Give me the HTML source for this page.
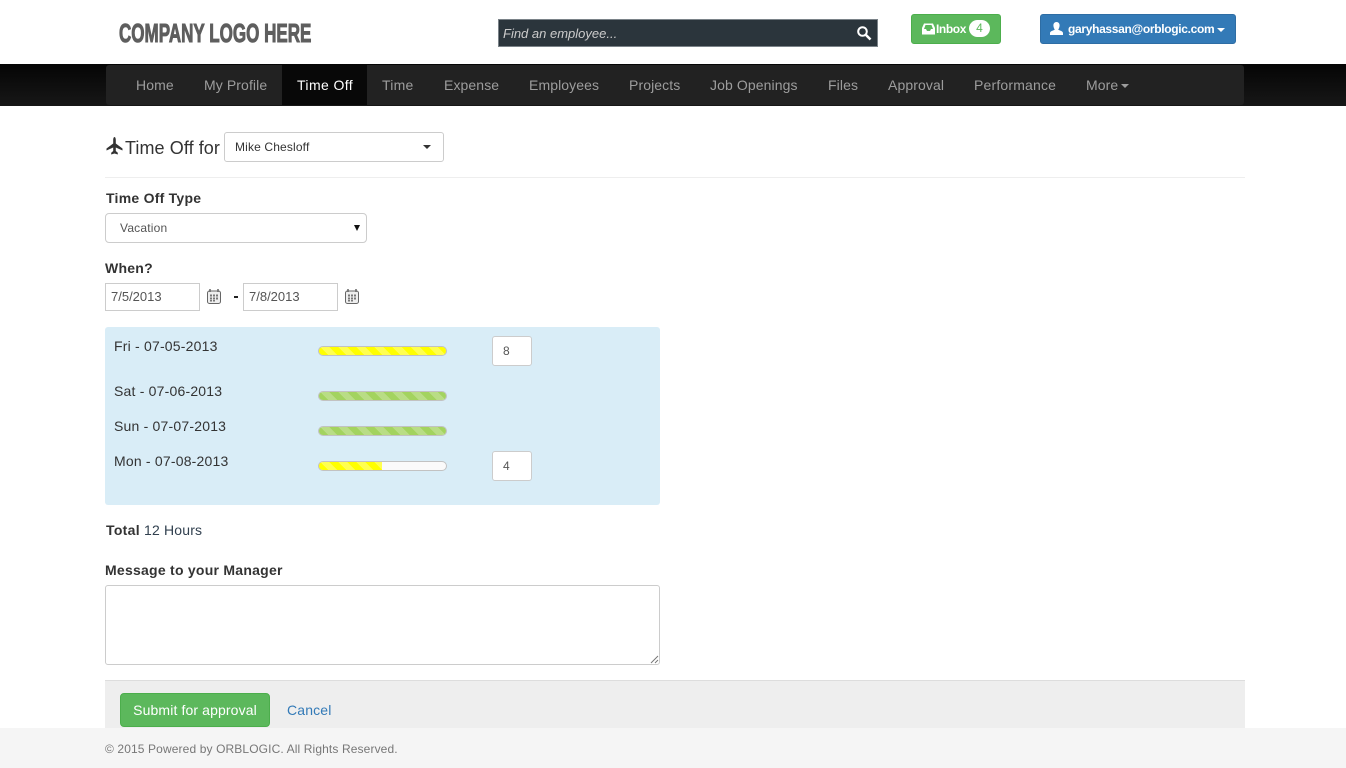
<!DOCTYPE html>
<html><head><meta charset="utf-8"><title>Time Off</title>
<style>
html,body{margin:0;padding:0;background:#fff}
body{width:1346px;height:768px;overflow:hidden;position:relative;font-family:"Liberation Sans",Arial,sans-serif;font-size:14px;color:#333}
.a{position:absolute;white-space:nowrap}
.nav{top:65px;height:41px;line-height:41px;color:#9d9d9d;font-size:14px;letter-spacing:.1px}
.b{font-weight:bold;letter-spacing:.25px}
.inp{background:#fff;border:1px solid #ccc;box-sizing:border-box}
.bar{position:absolute;left:318px;width:129px;height:10px;box-sizing:border-box;border:1px solid #c2c2c2;border-radius:5px;background:#fafafa;overflow:hidden}
.bar i{display:block;height:100%}
.y{background:repeating-linear-gradient(45deg,#ffff00 0 6.4px,#ffff50 6.4px 12.8px)}
.g{background:repeating-linear-gradient(45deg,#a3d35f 0 6.4px,#b9dd85 6.4px 12.8px)}
.day{left:114px;color:#333;font-size:14px;line-height:20px;letter-spacing:.2px}
</style></head><body>

<div class="a" style="left:119px;top:18px;font-size:26px;line-height:30px;font-weight:bold;color:#5e5e5e;-webkit-text-stroke:1px #5e5e5e;transform-origin:0 50%;transform:scaleX(.655)">COMPANY LOGO HERE</div>

<div class="a" style="left:498px;top:19px;width:380px;height:28px;box-sizing:border-box;background:#2b353c;border:1px solid #7a8288;color:#ccc;font-style:italic;font-size:13px;line-height:27px;padding-left:4px">Find an employee...</div>
<svg class="a" style="left:856px;top:25px" width="16" height="16" viewBox="0 0 16 16"><circle cx="6.5" cy="6.5" r="4.3" fill="none" stroke="#fff" stroke-width="2"/><path d="M10 10l4.5 4.5" stroke="#fff" stroke-width="2.6" fill="none"/></svg>

<div class="a" style="left:911px;top:14px;width:90px;height:30px;background:#5cb85c;border:1px solid #4cae4c;box-sizing:border-box;border-radius:3px"></div>
<svg class="a" style="left:922px;top:23px" width="13" height="12" viewBox="0 0 13 12"><path d="M2 .5h9L13 5v6.500H0V5z" fill="#fff"/><path d="M3.500 2h6L11 6H9L8 8H5L4 6H2z" fill="#5cb85c"/></svg>
<div class="a" style="left:936px;top:14px;line-height:30px;color:#fff;font-size:12px;font-weight:bold;letter-spacing:-.4px">Inbox</div>
<div class="a" style="left:969px;top:20px;width:21px;height:17px;border-radius:9px;background:#fff;color:#5cb85c;font-size:12px;line-height:17px;text-align:center">4</div>

<div class="a" style="left:1040px;top:14px;width:196px;height:30px;background:#337ab7;border:1px solid #2e6da4;box-sizing:border-box;border-radius:3px"></div>
<svg class="a" style="left:1050px;top:22px" width="13" height="13" viewBox="0 0 13 13"><path d="M6.500 0C8.500 0 9.600 1.500 9.600 3.500S8.500 7 8.200 7.800C9.500 8.600 12.800 9 13 11v2H0v-2c.2-2 3.500-2.400 4.800-3.200C4.500 7 3.400 5.500 3.400 3.500S4.500 0 6.500 0z" fill="#fff"/></svg>
<div class="a" style="left:1068px;top:14px;line-height:30px;color:#fff;font-size:12px;font-weight:bold;letter-spacing:-.32px">garyhassan@orblogic.com</div>
<div class="a" style="left:1217px;top:28px;border-top:4px solid #fff;border-left:4px solid transparent;border-right:4px solid transparent"></div>

<div class="a" style="left:0;top:64px;width:1346px;height:42px;background:linear-gradient(#050505,#171717)"></div>
<div class="a" style="left:106px;top:65px;width:1138px;height:40px;background:#222;border-radius:3px"></div>
<div class="a" style="left:282px;top:65px;width:85px;height:40px;background:#080808"></div>
<div class="a nav" style="left:136px">Home</div>
<div class="a nav" style="left:204px">My Profile</div>
<div class="a nav" style="left:297px;color:#fff;letter-spacing:.4px">Time Off</div>
<div class="a nav" style="left:382px;letter-spacing:.25px">Time</div>
<div class="a nav" style="left:444px">Expense</div>
<div class="a nav" style="left:529px">Employees</div>
<div class="a nav" style="left:629px">Projects</div>
<div class="a nav" style="left:710px">Job Openings</div>
<div class="a nav" style="left:828px">Files</div>
<div class="a nav" style="left:888px">Approval</div>
<div class="a nav" style="left:974px;letter-spacing:.18px">Performance</div>
<div class="a nav" style="left:1086px">More</div>
<div class="a" style="left:1121px;top:84px;border-top:4px solid #9d9d9d;border-left:4px solid transparent;border-right:4px solid transparent"></div>

<svg class="a" style="left:106px;top:137px" width="17" height="18" viewBox="0 0 17 18"><path d="M8.500 0C9.300 0 9.800 1.500 9.800 3v3.500L16.500 11.500v2L9.800 10.500V14l2 1.800v1.700L8.500 16.500 5.200 17.500v-1.700L7.200 14v-3.500L.5 13.500v-2L7.200 6.500V3C7.200 1.500 7.700 0 8.500 0z" fill="#333"/></svg>
<div class="a" style="left:125px;top:136px;font-size:18px;line-height:24px;color:#333;letter-spacing:.08px">Time Off for</div>
<div class="a inp" style="left:224px;top:132px;width:220px;height:30px;border-radius:3px;font-size:12px;line-height:28px;padding-left:10px;letter-spacing:.15px">Mike Chesloff</div>
<div class="a" style="left:423px;top:145px;border-top:4px solid #333;border-left:4px solid transparent;border-right:4px solid transparent"></div>
<div class="a" style="left:105px;top:177px;width:1140px;height:1px;background:#eee"></div>

<div class="a b" style="left:106px;top:190px;line-height:16px">Time Off Type</div>
<div class="a inp" style="left:105px;top:213px;width:262px;height:30px;border-radius:4px;font-size:12px;line-height:28px;padding-left:14px;color:#555;letter-spacing:.2px">Vacation</div>
<div class="a" style="left:354px;top:225px;border-top:6px solid #111;border-left:3px solid transparent;border-right:3px solid transparent"></div>

<div class="a b" style="left:105px;top:260px;line-height:16px">When?</div>
<div class="a inp" style="left:105px;top:283px;width:95px;height:28px;font-size:13px;line-height:26px;padding-left:5px;color:#555">7/5/2013</div>
<svg class="a" style="left:207px;top:289px" width="14" height="15" viewBox="0 0 14 15"><rect x=".5" y="2" width="13" height="12.500" rx="2" fill="#eee" stroke="#666"/><path d="M3 0v3M11 0v3" stroke="#666" stroke-width="1.500"/><path d="M3 5.500h2v2H3zM6 5.500h2v2H6zM9 5.500h2v2H9zM3 8.500h2v2H3zM6 8.500h2v2H6zM9 8.500h2v2H9zM3 11h2v1.500H3zM6 11h2v1.500H6z" fill="#777"/></svg>
<div class="a" style="left:234px;top:296px;width:4px;height:2px;background:#222"></div>
<div class="a inp" style="left:243px;top:283px;width:95px;height:28px;font-size:13px;line-height:26px;padding-left:5px;color:#555">7/8/2013</div>
<svg class="a" style="left:345px;top:289px" width="14" height="15" viewBox="0 0 14 15"><rect x=".5" y="2" width="13" height="12.500" rx="2" fill="#eee" stroke="#666"/><path d="M3 0v3M11 0v3" stroke="#666" stroke-width="1.500"/><path d="M3 5.500h2v2H3zM6 5.500h2v2H6zM9 5.500h2v2H9zM3 8.500h2v2H3zM6 8.500h2v2H6zM9 8.500h2v2H9zM3 11h2v1.500H3zM6 11h2v1.500H6z" fill="#777"/></svg>

<div class="a" style="left:105px;top:327px;width:555px;height:178px;background:#d9edf7;border-radius:3px"></div>
<div class="a day" style="top:336px">Fri - 07-05-2013</div>
<div class="a day" style="top:381px">Sat - 07-06-2013</div>
<div class="a day" style="top:416px">Sun - 07-07-2013</div>
<div class="a day" style="top:451px">Mon - 07-08-2013</div>
<div class="bar" style="top:346px"><i class="y" style="width:100%"></i></div>
<div class="bar" style="top:391px"><i class="g" style="width:100%"></i></div>
<div class="bar" style="top:426px"><i class="g" style="width:100%"></i></div>
<div class="bar" style="top:461px"><i class="y" style="width:63px"></i></div>
<div class="a inp" style="left:492px;top:336px;width:40px;height:30px;border-radius:3px;font-size:12px;line-height:28px;padding-left:10px;color:#555">8</div>
<div class="a inp" style="left:492px;top:451px;width:40px;height:30px;border-radius:3px;font-size:12px;line-height:28px;padding-left:10px;color:#555">4</div>

<div class="a" style="left:106px;top:522px;line-height:16px;color:#31404f;letter-spacing:.18px"><b style="color:#333;letter-spacing:.3px">Total</b> 12 Hours</div>
<div class="a b" style="left:105px;top:562px;line-height:16px">Message to your Manager</div>
<div class="a inp" style="left:105px;top:585px;width:555px;height:80px;border-radius:3px"></div>
<svg class="a" style="left:650px;top:655px" width="9" height="9" viewBox="0 0 9 9"><path d="M1 8l7-7M5 8l3-3" stroke="#777" fill="none"/></svg>

<div class="a" style="left:105px;top:680px;width:1140px;height:48px;background:#eee;border-top:1px solid #ddd;box-sizing:border-box"></div>
<div class="a" style="left:120px;top:693px;width:150px;height:34px;background:#5cb85c;border:1px solid #4cae4c;box-sizing:border-box;border-radius:4px;color:#fff;text-align:center;line-height:32px;letter-spacing:.12px">Submit for approval</div>
<div class="a" style="left:287px;top:693px;line-height:34px;color:#337ab7;letter-spacing:.15px">Cancel</div>

<div class="a" style="left:0;top:728px;width:1346px;height:40px;background:#f5f5f5"></div>
<div class="a" style="left:105px;top:741px;font-size:12px;line-height:16px;color:#777;letter-spacing:.12px">© 2015 Powered by ORBLOGIC. All Rights Reserved.</div>
</body></html>
